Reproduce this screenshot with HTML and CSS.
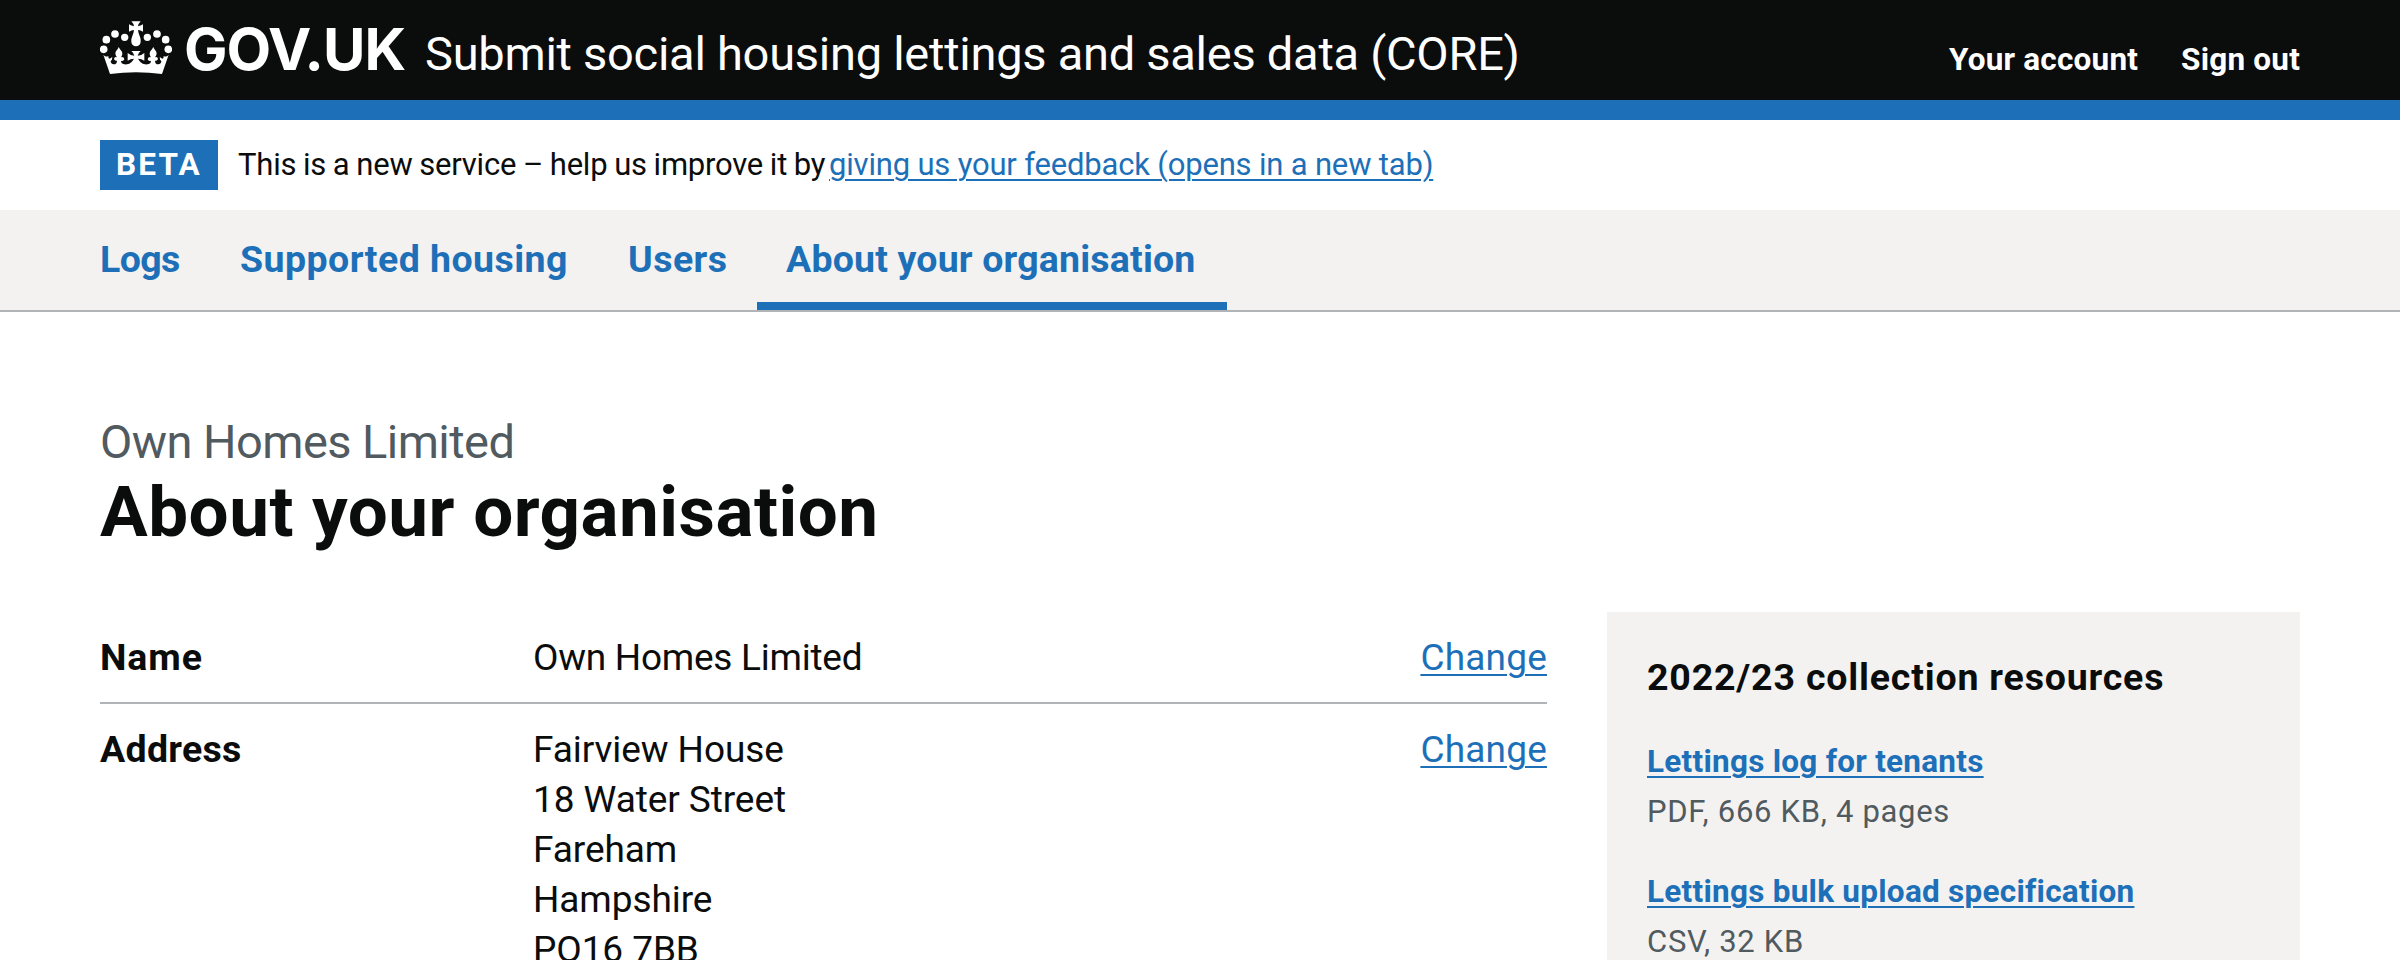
FILE: index.html
```html
<!DOCTYPE html>
<html lang="en">
<head>
<meta charset="utf-8">
<title>About your organisation - Submit social housing lettings and sales data (CORE)</title>
<link rel="stylesheet" href="styles.css">
</head>
<body>
<header class="header">
  <div class="header-inner">
    <svg class="crown" viewBox="12 15 216 162" aria-hidden="true">
      <g fill="#fff">
        <circle cx="23" cy="100" r="11.5"/><circle cx="31" cy="71" r="11.5"/><circle cx="57" cy="54" r="11.5"/><circle cx="86" cy="64" r="11"/>
        <circle cx="154" cy="64" r="11"/><circle cx="183" cy="54" r="11.5"/><circle cx="209" cy="71" r="11.5"/><circle cx="217" cy="100" r="11.5"/>
        <path d="M106 16H134Q127 23 126 31Q134 30 141 25V47Q134 42 126 42Q127 51 131 60Q135 69 134 77A14 14 0 0 1 106 77Q105 69 109 60Q113 51 114 42Q106 42 99 47V25Q106 30 114 31Q113 23 106 16Z"/>
        <path d="M42 174L22 116Q29 125 37 120Q36 128 41 128L49 123Q49 132 44 135Q44 144 53 145Q63 145 63 134Q59 136 54 130Q55 121 63 124Q55 114 60 106Q65 101 68 93Q72 101 77 106Q82 114 75 124Q83 121 85 130Q82 137 75 134Q75 144 86 145Q101 146 106 139Q110 134 114 128Q103 128 95 134V111Q104 119 115 119Q114 112 106 105H134Q126 112 125 119Q136 119 145 111V134Q137 128 126 128Q130 134 134 139Q139 146 154 145Q165 144 165 134Q158 137 155 130Q157 121 165 124Q158 114 163 106Q168 101 172 93Q175 101 180 106Q185 114 177 124Q185 121 186 130Q181 136 177 134Q177 145 187 145Q196 144 196 135Q191 132 191 123L199 128Q204 128 203 120Q211 125 218 116L198 174Q120 164 42 174Z"/>
      </g>
    </svg>
    <span class="wordmark">GOV.UK</span>
    <span class="service">Submit social housing lettings and sales data (CORE)</span>
    <nav class="account">
      <a class="account-link">Your account</a>
      <a class="account-link">Sign out</a>
    </nav>
  </div>
</header>
<div class="phase">
  <strong class="tag">BETA</strong>
  <span class="phase-text">This is a new service – help us improve it by</span>
  <a class="link phase-link">giving us your feedback (opens in a new tab)</a>
</div>
<nav class="primary">
  <a class="tab tab-short">Logs</a>
  <a class="tab">Supported housing</a>
  <a class="tab">Users</a>
  <a class="tab tab-current">About your organisation</a>
</nav>
<main class="main">
  <p class="caption">Own Homes Limited</p>
  <h1 class="title">About your organisation</h1>
  <div class="columns">
    <dl class="summary">
      <div class="row">
        <dt class="key key-name">Name</dt>
        <dd class="value">Own Homes Limited</dd>
        <dd class="action"><a class="link">Change</a></dd>
      </div>
      <div class="row">
        <dt class="key">Address</dt>
        <dd class="value value-address">Fairview House<br>18 Water Street<br>Fareham<br>Hampshire<br>PO16 7BB</dd>
        <dd class="action"><a class="link">Change</a></dd>
      </div>
    </dl>
    <aside class="resources">
      <h2 class="resources-title">2022/23 collection resources</h2>
      <div class="resource">
        <a class="link resource-link">Lettings log for tenants</a>
        <p class="meta">PDF, 666 KB, 4 pages</p>
      </div>
      <div class="resource">
        <a class="link resource-link">Lettings bulk upload specification</a>
        <p class="meta">CSV, 32 KB</p>
      </div>
    </aside>
  </div>
</main>
</body>
</html>
```
FILE: styles.css
```css
* { box-sizing: border-box; }
html { overflow: hidden; }
body {
  margin: 0;
  height: 960px;
  overflow: hidden;
  background: #fff;
  color: #0b0c0c;
  font-family: Roboto, "Liberation Sans", sans-serif;
}
p, h1, h2, dl, dt, dd { margin: 0; }

.header {
  height: 120px;
  background: #0b0c0c;
  border-bottom: 20px solid #1d70b8;
  color: #fff;
}
.header-inner {
  display: flex;
  align-items: baseline;
  padding: 19px 100px 0;
  line-height: 60px;
  white-space: nowrap;
}
.crown { width: 72px; height: 54px; margin-top: 2px; align-self: flex-start; flex: none; }
.wordmark {
  width: 226px;
  margin-left: 12px;
  font-family: Inter, sans-serif;
  font-size: 58px;
  font-weight: 700;
  letter-spacing: -1px;
}
.service { margin-left: 15px; font-size: 47px; letter-spacing: -0.26px; }
.account { display: flex; gap: 43px; margin-left: auto; }
.account-link { font-size: 31.5px; font-weight: 700; letter-spacing: 0.2px; }

.link {
  color: #1d70b8;
  text-decoration: underline;
  text-decoration-thickness: 2px;
  text-underline-offset: 4px;
}

.phase {
  display: flex;
  height: 90px;
  padding: 20px 100px;
  font-size: 31px;
  line-height: 50px;
  white-space: nowrap;
}
.tag {
  width: 118px;
  padding-left: 16px;
  background: #1d70b8;
  color: #fff;
  font-size: 31.5px;
  letter-spacing: 2.2px;
}
.phase-text { width: 591px; margin-left: 20px; letter-spacing: -0.22px; word-spacing: -0.7px; }
.phase-link { letter-spacing: -0.18px; }

.primary {
  display: grid;
  grid-template-columns: 140px 388px 159px 470px;
  height: 102px;
  padding-left: 70px;
  background: #f3f2f1;
  border-bottom: 2px solid #b1b4b6;
}
.tab {
  height: 100px;
  padding-left: 30px;
  color: #1d70b8;
  font-size: 37.5px;
  font-weight: 700;
  line-height: 98px;
  letter-spacing: 0.45px;
  white-space: nowrap;
}
.tab-short { letter-spacing: -0.6px; }
.tab-current { padding-left: 29px; border-bottom: 8px solid #1d70b8; letter-spacing: 0.18px; }

.main { padding: 100px 100px 0; }
.caption { color: #505a5f; font-size: 47px; line-height: 60px; letter-spacing: -0.56px; }
.title { margin-top: 2px; font-size: 71px; line-height: 75px; letter-spacing: 0.48px; }

.columns {
  display: grid;
  grid-template-columns: 1447px 693px;
  gap: 60px;
  margin-top: 63px;
}
.row {
  display: grid;
  grid-template-columns: 433px 1fr auto;
  padding: 20px 0;
  border-bottom: 2px solid #b1b4b6;
  font-size: 37px;
  line-height: 50px;
}
.key { font-size: 37.5px; font-weight: 700; letter-spacing: 0.3px; }
.key-name { letter-spacing: 0.9px; }
.value, .action { padding-top: 1px; margin-bottom: -1px; }
.value { letter-spacing: -0.26px; }
.value-address { letter-spacing: -0.08px; }
.action { letter-spacing: 0.2px; }

.resources { padding: 40px; background: #f3f2f1; line-height: 50px; }
.resources-title { margin-bottom: 35px; font-size: 37.5px; letter-spacing: 0.82px; }
.resource { margin-bottom: 30px; }
.resource-link { display: block; font-size: 31.5px; font-weight: 700; letter-spacing: 0.26px; }
.meta { color: #505a5f; font-size: 31px; letter-spacing: 0.7px; }
```
